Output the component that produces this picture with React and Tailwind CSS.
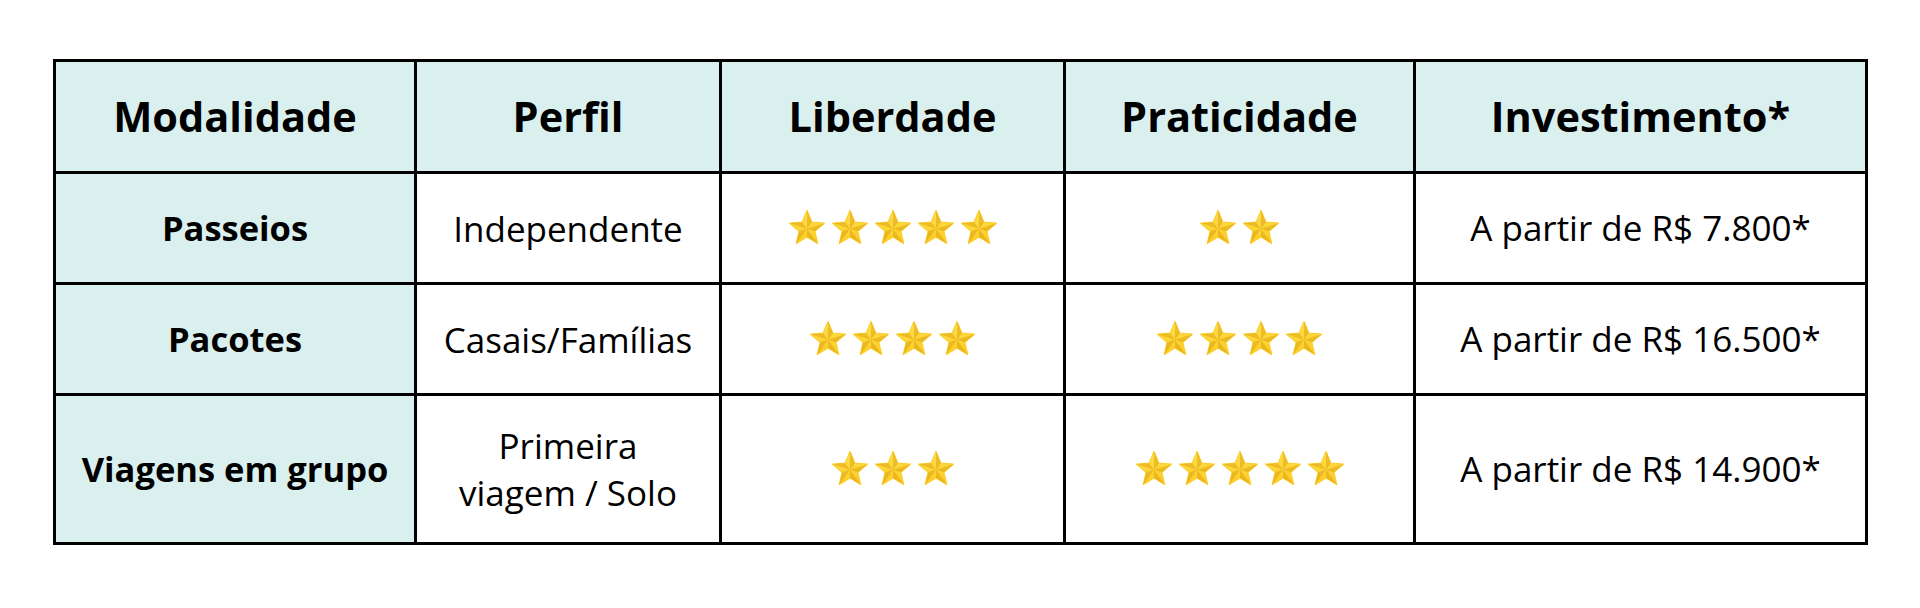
import React from "react";

const Star = () => (
  <svg width="38" height="38" viewBox="0 0 24 24" className="shrink-0">
    <defs>
      <linearGradient id="starFill" x1="0" y1="0" x2="0" y2="1">
        <stop offset="0%" stopColor="#FFE04D" />
        <stop offset="100%" stopColor="#FBCB22" />
      </linearGradient>
    </defs>
    <polygon
      points="12,1 15.06,8.29 22.94,8.95 16.95,14.11 18.76,21.8 12,17.7 5.24,21.8 7.05,14.11 1.06,8.95 8.94,8.29"
      fill="url(#starFill)"
      stroke="#FAD02E"
      strokeWidth="0.8"
      strokeLinejoin="round"
    />
    <g fill="#D99A0E" opacity="0.45">
      <polygon points="12,12.5 12,1 15.06,8.29" />
      <polygon points="12,12.5 22.94,8.95 16.95,14.11" />
      <polygon points="12,12.5 18.76,21.8 12,17.7" />
      <polygon points="12,12.5 5.24,21.8 7.05,14.11" />
      <polygon points="12,12.5 1.06,8.95 8.94,8.29" />
    </g>
  </svg>
);

const Stars = ({ n }) => (
  <div className="flex items-center justify-center gap-[5px]">
    {Array.from({ length: n }).map((_, i) => (
      <Star key={i} />
    ))}
  </div>
);

const headers = ["Modalidade", "Perfil", "Liberdade", "Praticidade", "Investimento*"];

const rows = [
  { name: "Passeios", perfil: "Independente", lib: 5, prat: 2, price: "A partir de R$ 7.800*", h: "h-[111px]" },
  { name: "Pacotes", perfil: "Casais/Famílias", lib: 4, prat: 4, price: "A partir de R$ 16.500*", h: "h-[111px]" },
  { name: "Viagens em grupo", perfil: "Primeira viagem / Solo", lib: 3, prat: 5, price: "A partir de R$ 14.900*", h: "h-[149px]", wrap: true },
];

const cell = "flex items-center justify-center text-center border-r-[3px] border-b-[3px] border-black";

export default function App() {
  return (
    <div className="w-[1920px] h-[608px] bg-white pt-[59px] pl-[53px] font-['Open_Sans',sans-serif] text-black">
      <div className="grid grid-cols-[361px_305px_344px_350px_452px] w-max border-l-[3px] border-t-[3px] border-black">
        {headers.map((h) => (
          <div key={h} className={`${cell} h-[112px] bg-[#daf0ee] text-[41.5px] font-bold`}>
            {h}
          </div>
        ))}
        {rows.map((r) => (
          <React.Fragment key={r.name}>
            <div className={`${cell} ${r.h} bg-[#daf0ee] text-[34.5px] font-bold`}>{r.name}</div>
            <div className={`${cell} ${r.h} text-[35px] leading-[47px]`}>
              {r.wrap ? (
                <span>
                  Primeira
                  <br />
                  viagem / Solo
                </span>
              ) : (
                r.perfil
              )}
            </div>
            <div className={`${cell} ${r.h}`}>
              <Stars n={r.lib} />
            </div>
            <div className={`${cell} ${r.h}`}>
              <Stars n={r.prat} />
            </div>
            <div className={`${cell} ${r.h} text-[35px]`}>{r.price}</div>
          </React.Fragment>
        ))}
      </div>
    </div>
  );
}
